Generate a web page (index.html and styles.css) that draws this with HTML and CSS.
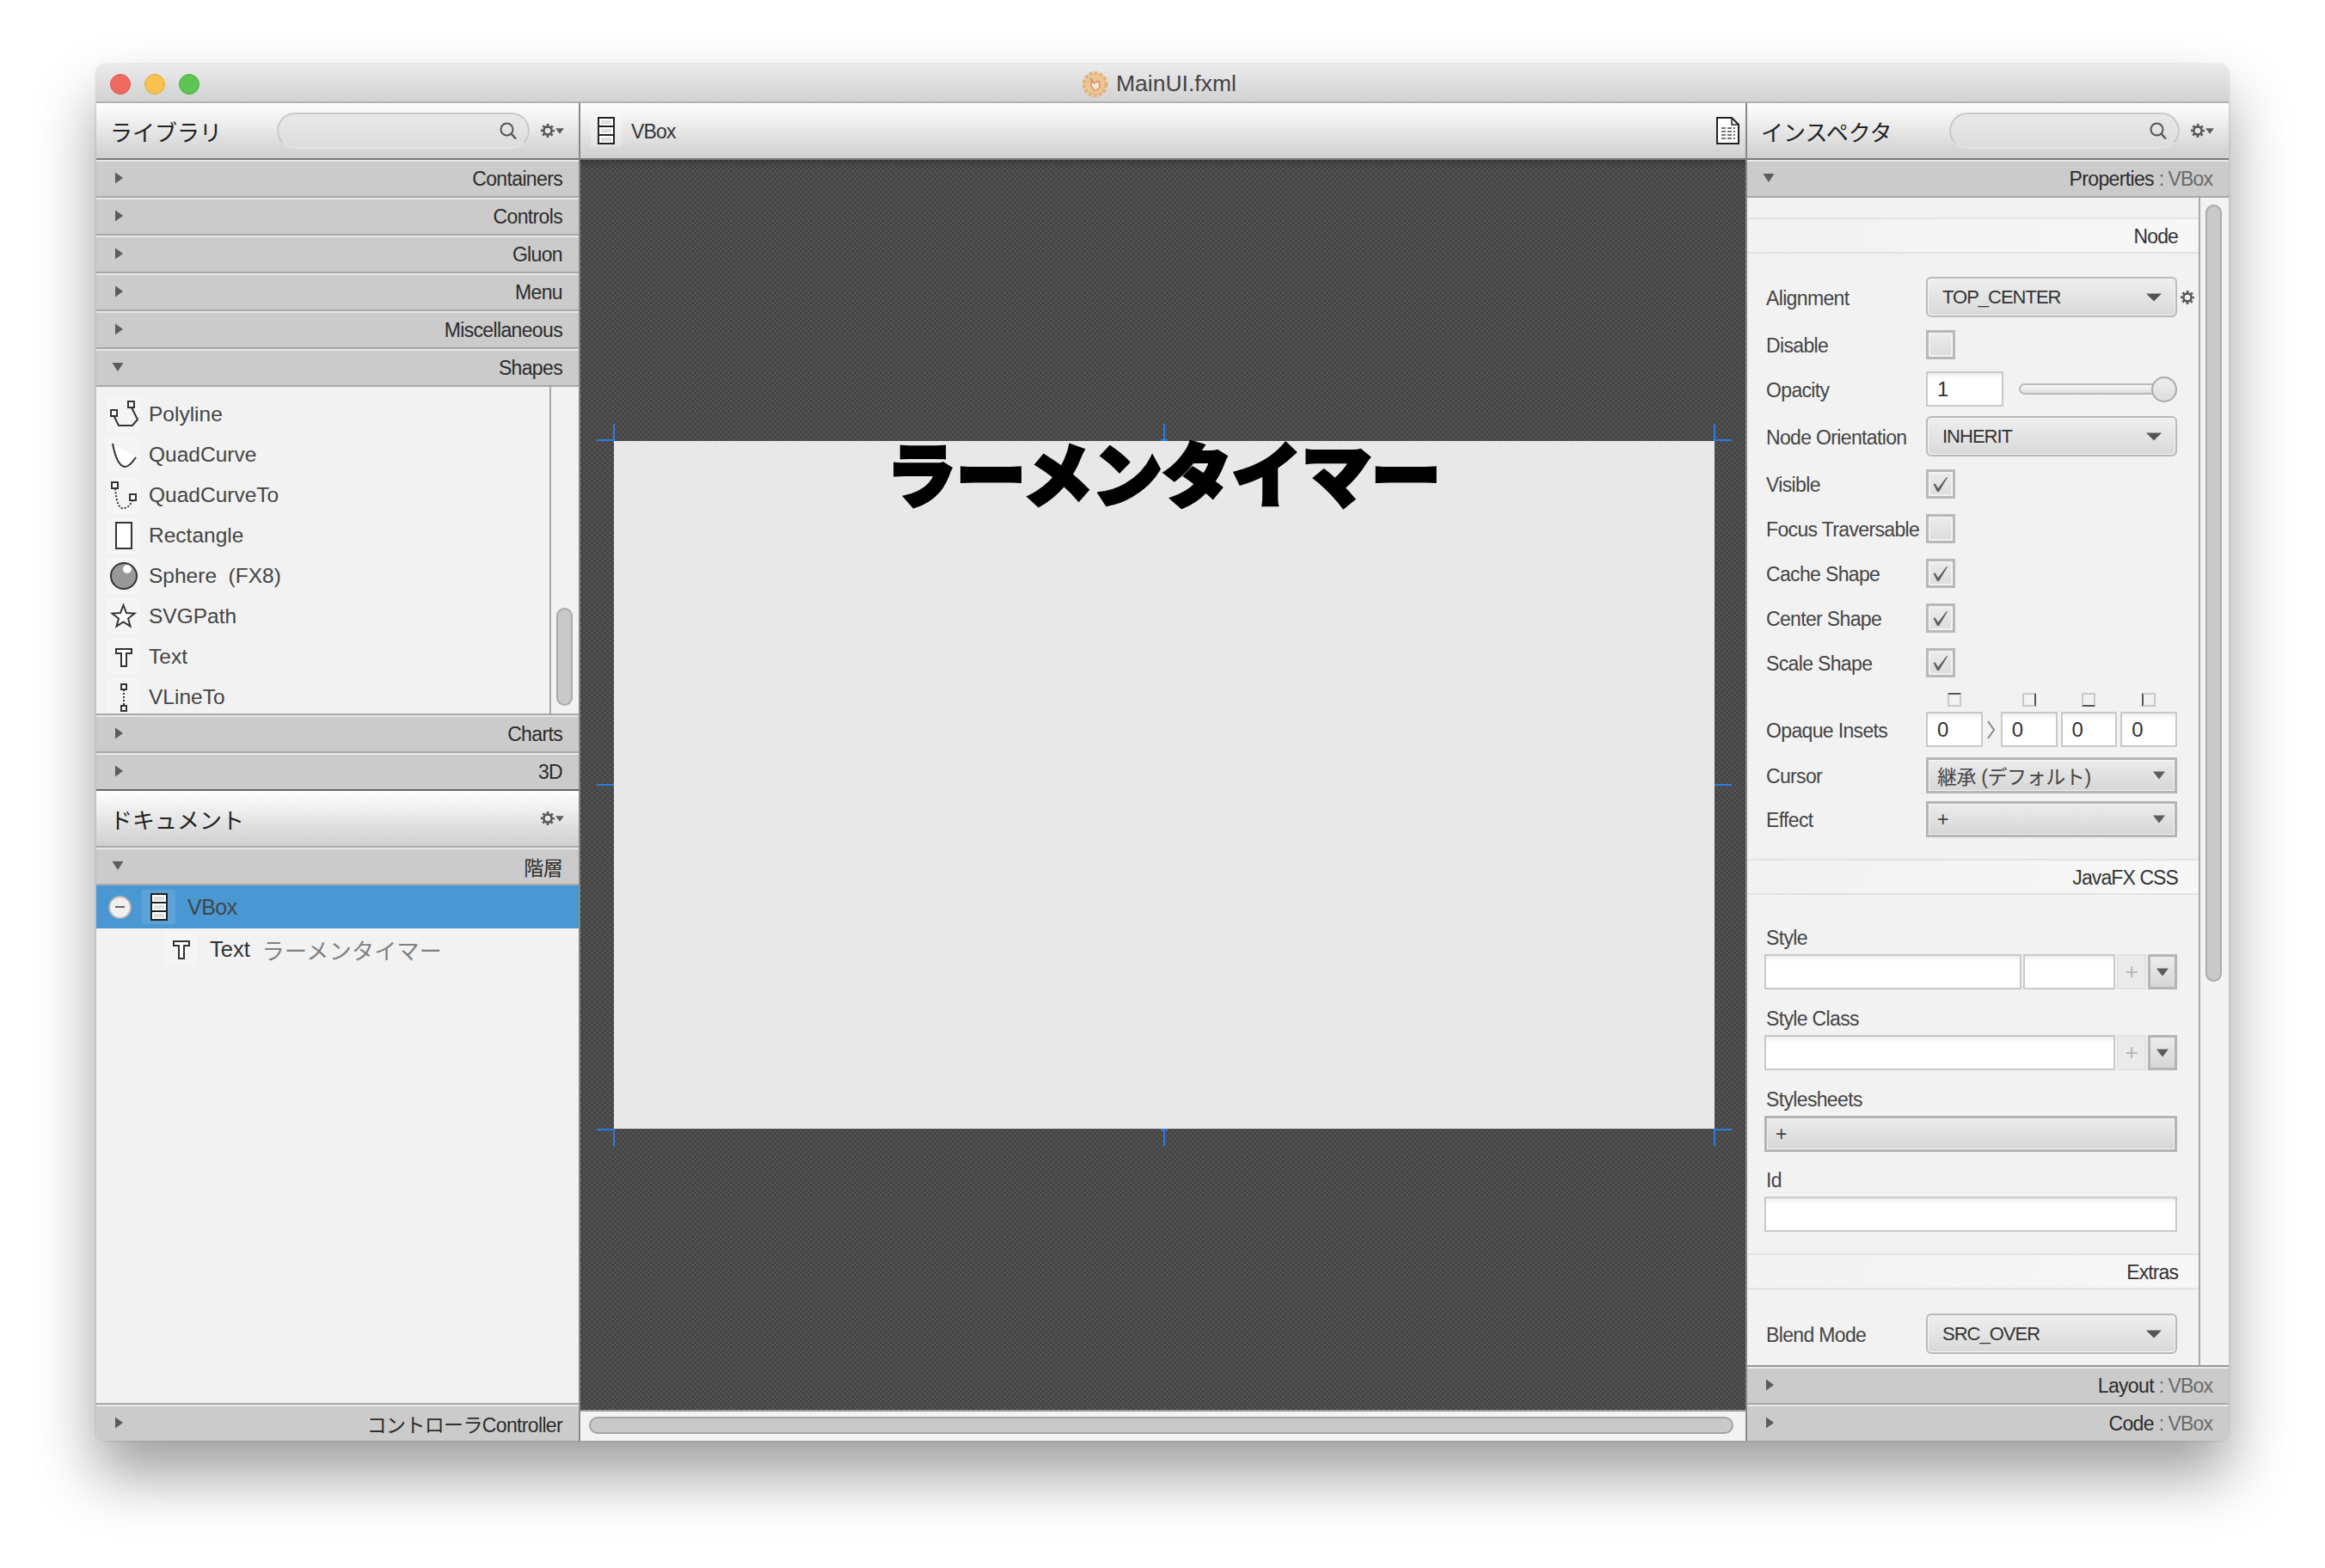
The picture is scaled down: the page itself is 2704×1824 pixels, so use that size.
FILE: index.html
```html
<!DOCTYPE html>
<html lang="ja">
  <head>
    <meta charset="UTF-8" />
    <title>MainUI.fxml</title>
    <link rel="stylesheet" href="styles.css">
  </head>
  <body>
    <svg class="defs" width="0" height="0">
      <symbol id="gear" viewBox="0 0 16 16">
        <circle cx="8" cy="8" r="4.6" fill="none" stroke="#555" stroke-width="2.6"/>
        <circle cx="8" cy="8" r="6.8" fill="none" stroke="#555" stroke-width="2.4" stroke-dasharray="2.6 2.74" stroke-dashoffset="1.3"/>
      </symbol>
      <symbol id="tri-right" viewBox="0 0 14 14"><path d="M4 0.5 L13 7 L4 13.5 Z" fill="#5c5c5c"/></symbol>
      <symbol id="tri-down" viewBox="0 0 14 14"><path d="M0.5 2 H13.5 L7 12 Z" fill="#5c5c5c"/></symbol>
      <symbol id="arrow" viewBox="0 0 18 10"><path d="M0 0.5 H18 L9 9.5 Z" fill="#555"/></symbol>
      <symbol id="arrow-small" viewBox="0 0 14 10"><path d="M0 0.5 H14 L7 9.5 Z" fill="#5c5c5c"/></symbol>
      <symbol id="check" viewBox="0 0 28 28"><path d="M5.5 14 L7.5 13.5 L11 19 L21 6 L22 6.5 L12 23 H10 Z" fill="#5c5c5c"/></symbol>
      <symbol id="search" viewBox="0 0 20 20"><circle cx="8.5" cy="8.5" r="7" fill="none" stroke="#555" stroke-width="2"/><path d="M13.5 13.5 L19 19.5" stroke="#555" stroke-width="2.4"/></symbol>
      <symbol id="vbox" viewBox="0 0 20 32">
        <rect x="1" y="1" width="18" height="30" fill="#fff" stroke="#222" stroke-width="2"/>
        <path d="M1 11 H19 M1 21 H19" stroke="#222" stroke-width="2"/>
        <path d="M4 4 H16 V8.5 H4 Z M4 14 H16 V18.5 H4 Z M4 24 H16 V28.5 H4 Z" fill="#ddd"/>
      </symbol>
      <symbol id="text-t" viewBox="0 0 39 42"><path d="M11 12 H29 V17 H23 V32 H17 V17 H11 Z" fill="#fff" stroke="#333" stroke-width="2"/></symbol>
    </svg>

    <div class="window">
      <div class="titlebar">
        <div class="lights">
          <span class="light red"></span>
          <span class="light yellow"></span>
          <span class="light green"></span>
        </div>
        <div class="doc-title">
          <svg class="doc-logo" width="31" height="32" viewBox="0 0 31 32">
            <circle cx="15.5" cy="16" r="13" fill="#ecc795" stroke="#e4b27a" stroke-width="4" stroke-dasharray="4 2"/>
            <path d="M11 9 L14 15 L20 12 L21 20 L15 24 L11 18 Z" fill="#f6e6d2" stroke="#d98f6a" stroke-width="1.5"/>
          </svg>
          <span>MainUI.fxml</span>
        </div>
        <div></div>
      </div>

      <div class="workspace">
        <div class="panel-left">
          <div class="panel-head">
            <span class="panel-title">ライブラリ</span>
            <div class="searchbox"><svg width="20" height="20"><use href="#search"/></svg></div>
            <div class="gear-menu"><svg width="16" height="16"><use href="#gear"/></svg><svg width="10" height="7"><use href="#arrow-small"/></svg></div>
          </div>
          <div class="section"><svg width="14" height="14"><use href="#tri-right"/></svg><span>Containers</span></div>
          <div class="section"><svg width="14" height="14"><use href="#tri-right"/></svg><span>Controls</span></div>
          <div class="section"><svg width="14" height="14"><use href="#tri-right"/></svg><span>Gluon</span></div>
          <div class="section"><svg width="14" height="14"><use href="#tri-right"/></svg><span>Menu</span></div>
          <div class="section"><svg width="14" height="14"><use href="#tri-right"/></svg><span>Miscellaneous</span></div>
          <div class="section"><svg width="14" height="14"><use href="#tri-down"/></svg><span>Shapes</span></div>

          <div class="shape-pane">
            <div class="shape-list">
              <div class="shape">
                <svg class="shape-icon" viewBox="0 0 39 42"><rect x="25" y="6" width="7" height="7" fill="#fff" stroke="#333" stroke-width="2"/><rect x="5" y="16" width="7" height="7" fill="#fff" stroke="#333" stroke-width="2"/><path d="M29 13 L36 27 L30 34 H14 L8.5 23" fill="none" stroke="#333" stroke-width="2"/></svg>
                <span>Polyline</span>
              </div>
              <div class="shape">
                <svg class="shape-icon" viewBox="0 0 39 42"><path d="M7 8 C10 24 14 34 21 35 C26 35 30 30 34 24 Z" fill="#fff"/><path d="M7 8 C10 24 14 34 21 35 C26 35 30 30 34 24" fill="none" stroke="#333" stroke-width="2"/></svg>
                <span>QuadCurve</span>
              </div>
              <div class="shape">
                <svg class="shape-icon" viewBox="0 0 39 42"><path d="M10 13 Q12 38 20 36 Q26 36 30 27" fill="none" stroke="#333" stroke-width="2" stroke-dasharray="2 2"/><rect x="6" y="6" width="7" height="7" fill="#fff" stroke="#333" stroke-width="2"/><rect x="27" y="20" width="7" height="7" fill="#fff" stroke="#333" stroke-width="2"/></svg>
                <span>QuadCurveTo</span>
              </div>
              <div class="shape">
                <svg class="shape-icon" viewBox="0 0 39 42"><rect x="11" y="6" width="18" height="30" fill="#fff" stroke="#333" stroke-width="2"/></svg>
                <span>Rectangle</span>
              </div>
              <div class="shape">
                <svg class="shape-icon" viewBox="0 0 39 42"><circle cx="20" cy="21" r="15" fill="#999" stroke="#333" stroke-width="2"/><circle cx="24" cy="13" r="5" fill="#fff"/></svg>
                <span>Sphere&nbsp;&nbsp;(FX8)</span>
              </div>
              <div class="shape">
                <svg class="shape-icon" viewBox="0 0 39 42"><path d="M19.5 8 L23 17 L32.5 17.5 L25 23.5 L27.5 32.5 L19.5 27.5 L11.5 32.5 L14 23.5 L6.5 17.5 L16 17 Z" fill="#fff" stroke="#333" stroke-width="2"/></svg>
                <span>SVGPath</span>
              </div>
              <div class="shape">
                <svg class="shape-icon"><use href="#text-t"/></svg>
                <span>Text</span>
              </div>
              <div class="shape">
                <svg class="shape-icon" viewBox="0 0 39 42"><path d="M20 12 V30" stroke="#333" stroke-width="2" stroke-dasharray="2 2"/><rect x="17" y="6" width="6" height="6" fill="#fff" stroke="#333" stroke-width="2"/><rect x="17" y="31" width="6" height="6" fill="#fff" stroke="#333" stroke-width="2"/></svg>
                <span>VLineTo</span>
              </div>
            </div>
            <div class="vscroll vscroll-lib"><div class="thumb"></div></div>
          </div>

          <div class="section"><svg width="14" height="14"><use href="#tri-right"/></svg><span>Charts</span></div>
          <div class="section section-last"><svg width="14" height="14"><use href="#tri-right"/></svg><span>3D</span></div>

          <div class="panel-head panel-head-doc">
            <span class="panel-title">ドキュメント</span>
            <div class="gear-menu"><svg width="16" height="16"><use href="#gear"/></svg><svg width="10" height="7"><use href="#arrow-small"/></svg></div>
          </div>
          <div class="section"><svg width="14" height="14"><use href="#tri-down"/></svg><span>階層</span></div>

          <div class="tree">
            <div class="tree-row selected">
              <span class="collapse"><i></i></span>
              <span class="tree-icon"><svg width="20" height="32"><use href="#vbox"/></svg></span>
              <span class="tree-label">VBox</span>
            </div>
            <div class="tree-row child">
              <span class="tree-icon"><svg width="39" height="42"><use href="#text-t"/></svg></span>
              <span class="tree-label">Text</span>
              <span class="tree-value">ラーメンタイマー</span>
            </div>
          </div>
          <div class="section section-end"><svg width="14" height="14"><use href="#tri-right"/></svg><span>コントローラController</span></div>
        </div>

        <div class="panel-center">
          <div class="panel-head crumb-bar">
            <span class="crumb-icon"><svg width="20" height="32"><use href="#vbox"/></svg></span>
            <span class="crumb-label">VBox</span>
            <svg class="sheet-icon" width="27" height="32" viewBox="0 0 27 32">
              <path d="M1 1 H18 L26 9 V31 H1 Z" fill="#fff" stroke="#222" stroke-width="2"/>
              <path d="M18 1 V9 H26" fill="none" stroke="#222" stroke-width="1.5"/>
              <path d="M6 13 H22 M6 17 H22 M6 21 H22 M6 25 H22" stroke="#777" stroke-width="2" stroke-dasharray="5 2"/>
            </svg>
          </div>
          <div class="canvas">
            <div class="stage">
              <div class="stage-text">ラーメンタイマー</div>
              <svg class="handles" width="1320" height="840" viewBox="0 0 1320 840">
                <path d="M0 19 H20 M20 0 V20 M660 0 V20 M656 19 H664 M1300 0 V20 M1300 19 H1320 M0 420 H20 M1300 420 H1320 M0 821 H20 M20 820 V840 M660 820 V840 M656 821 H664 M1300 820 V840 M1300 821 H1320" fill="none" stroke="#2b7be4" stroke-width="2"/>
              </svg>
            </div>
          </div>
          <div class="hscroll"><div class="hthumb"></div></div>
        </div>

        <div class="panel-right">
          <div class="panel-head">
            <span class="panel-title">インスペクタ</span>
            <div class="searchbox searchbox-short"><svg width="20" height="20"><use href="#search"/></svg></div>
            <div class="gear-menu"><svg width="16" height="16"><use href="#gear"/></svg><svg width="10" height="7"><use href="#arrow-small"/></svg></div>
          </div>
          <div class="section"><svg width="14" height="14"><use href="#tri-down"/></svg><span>Properties <b>: VBox</b></span></div>

          <div class="props-pane">
            <div class="props">
              <div class="band">Node</div>
              <div class="group">
                <div class="row m27">
                  <span class="label">Alignment</span>
                  <div class="combo"><span>TOP_CENTER</span><svg width="18" height="10"><use href="#arrow"/></svg></div>
                  <svg class="row-gear" width="16" height="16"><use href="#gear"/></svg>
                </div>
                <div class="row m15"><span class="label">Disable</span><span class="checkbox"></span></div>
                <div class="row m14">
                  <span class="label">Opacity</span>
                  <div class="input input-opacity">1</div>
                  <div class="slider"><div class="slider-knob"></div></div>
                </div>
                <div class="row m11">
                  <span class="label">Node Orientation</span>
                  <div class="combo"><span>INHERIT</span><svg width="18" height="10"><use href="#arrow"/></svg></div>
                </div>
                <div class="row m15"><span class="label">Visible</span><span class="checkbox"><svg width="28" height="28"><use href="#check"/></svg></span></div>
                <div class="row"><span class="label">Focus Traversable</span><span class="checkbox"></span></div>
                <div class="row"><span class="label">Cache Shape</span><span class="checkbox"><svg width="28" height="28"><use href="#check"/></svg></span></div>
                <div class="row"><span class="label">Center Shape</span><span class="checkbox"><svg width="28" height="28"><use href="#check"/></svg></span></div>
                <div class="row"><span class="label">Scale Shape</span><span class="checkbox"><svg width="28" height="28"><use href="#check"/></svg></span></div>

                <div class="inset-icons">
                  <span class="inset-cell"><i class="side side-top"></i></span>
                  <span class="inset-arrow"></span>
                  <span class="inset-cell"><i class="side side-right"></i></span>
                  <span class="inset-cell"><i class="side side-bottom"></i></span>
                  <span class="inset-cell"><i class="side side-left"></i></span>
                </div>
                <div class="row m6">
                  <span class="label">Opaque Insets</span>
                  <div class="insets">
                    <div class="input inset-cell">0</div>
                    <span class="inset-arrow"><svg width="10" height="22" viewBox="0 0 10 22"><path d="M1 1 L8 11 L1 21" fill="none" stroke="#888" stroke-width="2"/></svg></span>
                    <div class="input inset-cell">0</div>
                    <div class="input inset-cell">0</div>
                    <div class="input inset-cell">0</div>
                  </div>
                </div>
                <div class="row m12">
                  <span class="label">Cursor</span>
                  <div class="menu-button"><span>継承 (デフォルト)</span><svg width="14" height="10"><use href="#arrow-small"/></svg></div>
                </div>
                <div class="row m9">
                  <span class="label">Effect</span>
                  <div class="menu-button"><span>+</span><svg width="14" height="10"><use href="#arrow-small"/></svg></div>
                </div>
              </div>

              <div class="band band-next">JavaFX CSS</div>
              <div class="fields">
                <div class="field-label first">Style</div>
                <div class="field-line">
                  <div class="input grow"></div>
                  <div class="input input-value"></div>
                  <div class="mini-btn">+</div>
                  <div class="mini-menu"><svg width="14" height="10"><use href="#arrow-small"/></svg></div>
                </div>
                <div class="field-label">Style Class</div>
                <div class="field-line">
                  <div class="input grow"></div>
                  <div class="mini-btn">+</div>
                  <div class="mini-menu"><svg width="14" height="10"><use href="#arrow-small"/></svg></div>
                </div>
                <div class="field-label">Stylesheets</div>
                <div class="field-line"><div class="menu-button wide"><span>+</span></div></div>
                <div class="field-label">Id</div>
                <div class="field-line"><div class="input grow"></div></div>
              </div>

              <div class="band band-next">Extras</div>
              <div class="group">
                <div class="row m28">
                  <span class="label">Blend Mode</span>
                  <div class="combo"><span>SRC_OVER</span><svg width="18" height="10"><use href="#arrow"/></svg></div>
                </div>
              </div>
            </div>
            <div class="vscroll vscroll-props"><div class="thumb"></div></div>
          </div>

          <div class="section"><svg width="14" height="14"><use href="#tri-right"/></svg><span>Layout <b>: VBox</b></span></div>
          <div class="section section-end"><svg width="14" height="14"><use href="#tri-right"/></svg><span>Code <b>: VBox</b></span></div>
        </div>
      </div>
    </div>
  </body>
</html>
```

FILE: styles.css
```css
* {
  box-sizing: border-box;
}
body {
  margin: 0;
  padding: 75px 0 0 112px;
  width: 2704px;
  height: 1824px;
  overflow: hidden;
  background-color: #fff;
  font-family: "Liberation Sans", "Noto Sans CJK JP", sans-serif;
  font-size: 23px;
  color: #333;
}
.defs {
  position: absolute;
}
.window {
  width: 2480px;
  height: 1601px;
  display: flex;
  flex-direction: column;
  border-radius: 10px;
  background-color: #f2f2f2;
  box-shadow: 0 40px 70px rgba(0, 0, 0, 0.38), 0 0 3px rgba(0, 0, 0, 0.2);
  overflow: hidden;
}

/* title bar */
.titlebar {
  height: 45px;
  flex: none;
  display: grid;
  grid-template-columns: 1fr auto 1fr;
  align-items: center;
  padding: 2px 24px 0 16px;
  background: linear-gradient(#ebebeb, #d2d2d2);
  border-bottom: 2px solid #b1b1b1;
}
.lights {
  display: flex;
  gap: 16px;
}
.light {
  width: 24px;
  height: 24px;
  border-radius: 50%;
}
.red { background-color: #f0695f; border: 1px solid #e2574c; }
.yellow { background-color: #f7c24f; border: 1px solid #e6a93c; }
.green { background-color: #5ec552; border: 1px solid #4dae42; }
.doc-title {
  display: flex;
  align-items: center;
  gap: 9px;
  font-size: 26.5px;
  color: #444;
}

.workspace {
  flex: 1;
  display: flex;
  min-height: 0;
}
.panel-left {
  width: 563px;
  flex: none;
  display: flex;
  flex-direction: column;
  border-right: 2px solid #888;
}
.panel-center {
  flex: 1;
  display: flex;
  flex-direction: column;
  min-width: 0;
}
.panel-right {
  width: 562px;
  flex: none;
  display: flex;
  flex-direction: column;
  border-left: 2px solid #888;
}

/* panel headers */
.panel-head {
  height: 66px;
  flex: none;
  display: flex;
  align-items: center;
  padding: 0 17px 0 16px;
  background: linear-gradient(#fff, #cfcfcf);
  border-bottom: 2px solid #7b7b7b;
}
.panel-title {
  font-size: 26px;
  letter-spacing: 0;
  color: #222;
  flex: 1;
}
.panel-head-doc {
  border-bottom-color: #aaa;
}
.searchbox {
  width: 294px;
  height: 42px;
  display: flex;
  align-items: center;
  justify-content: flex-end;
  padding-right: 13px;
  border: 2px solid #c9c9c9;
  border-bottom-color: #e2e2e2;
  border-radius: 21px;
  background: linear-gradient(#e9e9e9, #dcdcdc);
}
.searchbox-short {
  width: 268px;
}
.gear-menu {
  display: flex;
  align-items: center;
  gap: 1px;
  margin-left: 13px;
}

/* accordion rows */
.section {
  height: 44px;
  flex: none;
  display: flex;
  align-items: center;
  justify-content: space-between;
  padding: 0 19px 0 18px;
  background-color: #cbcbcb;
  border-top: 2px solid #e8e8e8;
  border-bottom: 2px solid #a8a8a8;
  font-size: 23px;
  letter-spacing: -0.65px;
  color: #2c2c2c;
}
.section svg {
  margin-top: -3px;
}
.section b {
  font-weight: normal;
  letter-spacing: -0.9px;
  color: #6a6a6a;
}
.section-last {
  border-bottom-color: #666;
}
.section-end {
  height: 42px;
  border-bottom: none;
}

/* library list */
.shape-pane {
  height: 382px;
  flex: none;
  display: flex;
  border-bottom: 2px solid #a8a8a8;
}
.shape-list {
  flex: 1;
  padding: 8px 0 0 12px;
  border-right: 2px solid #a8a8a8;
  overflow: hidden;
}
.shape {
  height: 47px;
  display: flex;
  align-items: center;
  gap: 10px;
  font-size: 24.5px;
  color: #444;
}
.shape-icon {
  width: 39px;
  height: 42px;
  background-color: #f5f5f5;
}
.vscroll {
  flex: none;
  display: flex;
  justify-content: center;
  padding-right: 2px;
}
.vscroll-lib {
  width: 32px;
  padding-top: 257px;
}
.vscroll-lib .thumb {
  height: 114px;
}
.vscroll-props {
  width: 33px;
  padding-top: 8px;
}
.vscroll-props .thumb {
  height: 904px;
}
.thumb {
  width: 19px;
  background-color: #c9c9c9;
  border: 2px solid #aaa;
  border-radius: 10px;
}

/* document tree */
.tree {
  flex: 1;
  border-bottom: 2px solid #a8a8a8;
}
.tree-row {
  height: 50px;
  display: flex;
  align-items: center;
}
.selected {
  padding-left: 14px;
  background-color: #4a98d3;
  color: #444;
}
.selected .tree-label {
  letter-spacing: -0.5px;
}
.collapse {
  width: 27px;
  height: 27px;
  display: flex;
  align-items: center;
  justify-content: center;
  margin-right: 12px;
  border: 2px solid #b5b5b5;
  border-radius: 50%;
  background-color: #f0f0f0;
}
.collapse i {
  width: 11px;
  height: 2px;
  background-color: #666;
}
.tree-icon {
  width: 39px;
  height: 40px;
  display: flex;
  align-items: center;
  justify-content: center;
  margin-right: 14px;
  background-color: rgba(255, 255, 255, 0.1);
  font-size: 0;
}
.tree-label {
  font-size: 25px;
}
.child {
  height: 48px;
  padding-left: 79px;
}
.child .tree-icon {
  background-color: #f5f5f5;
}
.child .tree-label {
  font-size: 25.5px;
}
.tree-value {
  margin-left: 14px;
  font-size: 26px;
  letter-spacing: 0.3px;
  color: #808080;
}

/* center */
.crumb-bar {
  padding: 0 7px 0 12px;
}
.crumb-icon {
  width: 36px;
  height: 38px;
  display: flex;
  align-items: center;
  justify-content: center;
  background-color: rgba(255, 255, 255, 0.25);
  font-size: 0;
}
.crumb-label {
  flex: 1;
  margin-left: 11px;
  padding-top: 2px;
  letter-spacing: -0.8px;
}
.canvas {
  flex: 1;
  display: flex;
  align-items: center;
  justify-content: center;
  background-color: #4a4a4a;
  background-image: conic-gradient(#525252 25%, #444 0 50%, #525252 0 75%, #444 0);
  background-size: 6px 6px;
  box-shadow: inset 0 8px 8px -6px rgba(0, 0, 0, 0.35);
}
.stage {
  position: relative;
  width: 1280px;
  height: 800px;
  margin-left: 2px;
  background-color: #e8e8e8;
}
.stage-text {
  height: 100px;
  text-align: center;
  font-family: "Noto Sans CJK JP", sans-serif;
  font-size: 81px;
  font-weight: 900;
  line-height: 70px;
  color: #000;
  -webkit-text-stroke: 4px #000;
}
.handles {
  position: absolute;
  left: -20px;
  top: -20px;
}
.hscroll {
  height: 36px;
  flex: none;
  padding: 6px 14px 0 10px;
  border-top: 2px solid #999;
  background-color: #f2f2f2;
}
.hthumb {
  height: 20px;
  background-color: #c9c9c9;
  border: 2px solid #a3a3a3;
  border-radius: 10px;
}

/* inspector */
.props-pane {
  flex: 1;
  min-height: 0;
  display: flex;
  border-bottom: 2px solid #999;
}
.props {
  flex: 1;
  padding-top: 23px;
  border-right: 2px solid #a8a8a8;
  overflow: hidden;
}
.band {
  height: 42px;
  display: flex;
  align-items: center;
  justify-content: flex-end;
  padding: 3px 24px 0 0;
  background: linear-gradient(to right, #f2f2f2, #f7f7f7);
  border-top: 2px solid #e3e3e3;
  border-bottom: 2px solid #e3e3e3;
  letter-spacing: -0.9px;
}
.band-next {
  margin-top: 25px;
}
.group {
  padding: 0 25px 0 22px;
}
.row {
  display: flex;
  align-items: center;
  margin-top: 18px;
}
.m6 { margin-top: 6px; }
.m9 { margin-top: 9px; }
.m11 { margin-top: 11px; }
.m12 { margin-top: 12px; }
.m14 { margin-top: 14px; }
.m15 { margin-top: 15px; }
.m27 { margin-top: 27px; }
.m28 { margin-top: 28px; }
.label {
  width: 186px;
  flex: none;
  padding-top: 3px;
  white-space: nowrap;
  letter-spacing: -0.65px;
  color: #444;
}
.combo {
  flex: 1;
  height: 47px;
  display: flex;
  align-items: center;
  justify-content: space-between;
  padding: 0 16px 0 17px;
  border: 2px solid #b9b9b9;
  border-radius: 6px;
  background: linear-gradient(#efefef, #d9d9d9);
  box-shadow: inset 0 0 0 1px #f5f5f5;
  font-size: 22px;
  letter-spacing: -1px;
  color: #333;
}
.row-gear {
  flex: none;
  margin: 0 -20px 0 4px;
}
.checkbox {
  width: 34px;
  height: 34px;
  display: flex;
  align-items: center;
  justify-content: center;
  border: 3px solid #b9b9b9;
  background: linear-gradient(#ececec, #dcdcdc);
  box-shadow: inset 0 0 0 2px #f2f2f2;
}
.input {
  height: 41px;
  display: flex;
  align-items: center;
  padding-left: 11px;
  background-color: #fff;
  border: 2px solid #c9c9c9;
  box-shadow: inset 0 6px 6px -5px rgba(0, 0, 0, 0.12);
  font-size: 24px;
}
.input-opacity {
  width: 90px;
  flex: none;
}
.slider {
  position: relative;
  flex: 1;
  height: 13px;
  margin-left: 18px;
  border: 2px solid #b9b9b9;
  border-radius: 7px;
  background: linear-gradient(#f7f7f7, #e0e0e0);
}
.slider-knob {
  position: absolute;
  right: -2px;
  top: -10.5px;
  width: 30px;
  height: 30px;
  border: 2px solid #aaa;
  border-radius: 50%;
  background: linear-gradient(#eee, #ddd);
}
.inset-icons {
  display: flex;
  align-items: center;
  height: 16px;
  margin: 18px 0 0 186px;
}
.inset-icons .inset-cell,
.insets .inset-cell {
  flex: 1;
  min-width: 0;
}
.inset-icons .inset-cell:nth-child(n+4),
.insets .inset-cell:nth-child(n+4) {
  margin-left: 4px;
}
.inset-icons .inset-cell {
  display: flex;
  justify-content: center;
}
.inset-arrow {
  width: 21px;
  flex: none;
  display: flex;
  justify-content: center;
}
.insets {
  flex: 1;
  display: flex;
  align-items: center;
}
.side {
  width: 16px;
  height: 16px;
  border: 2px solid #c9c9c9;
}
.side-top { border-top-color: #555; }
.side-right { border-right-color: #555; }
.side-bottom { border-bottom-color: #555; }
.side-left { border-left-color: #555; }
.menu-button {
  flex: 1;
  height: 42px;
  display: flex;
  align-items: center;
  justify-content: space-between;
  padding: 0 11px 0 10px;
  border: 3px solid #b5b5b5;
  background: linear-gradient(#ececec, #d6d6d6);
  box-shadow: inset 0 0 0 1px #f5f5f5;
  font-size: 23px;
  letter-spacing: -0.4px;
  color: #444;
}
.fields {
  padding: 0 25px 0 20px;
}
.field-label {
  height: 28px;
  display: flex;
  align-items: center;
  margin: 19px 0 6px;
  padding: 2px 0 0 2px;
  letter-spacing: -0.65px;
  color: #444;
}
.field-label.first {
  margin-top: 35px;
}
.field-line {
  height: 41px;
  display: flex;
  gap: 2px;
}
.field-line .input {
  height: auto;
}
.grow {
  flex: 1;
}
.input-value {
  width: 107px;
  flex: none;
}
.mini-btn {
  width: 34px;
  flex: none;
  display: flex;
  align-items: center;
  justify-content: center;
  border: 2px solid #e2e2e2;
  background-color: #ebebeb;
  color: #b5b5b5;
  font-size: 26px;
}
.mini-menu {
  width: 34px;
  flex: none;
  display: flex;
  align-items: center;
  justify-content: center;
  border: 3px solid #b5b5b5;
  background: linear-gradient(#ececec, #d6d6d6);
}
```
